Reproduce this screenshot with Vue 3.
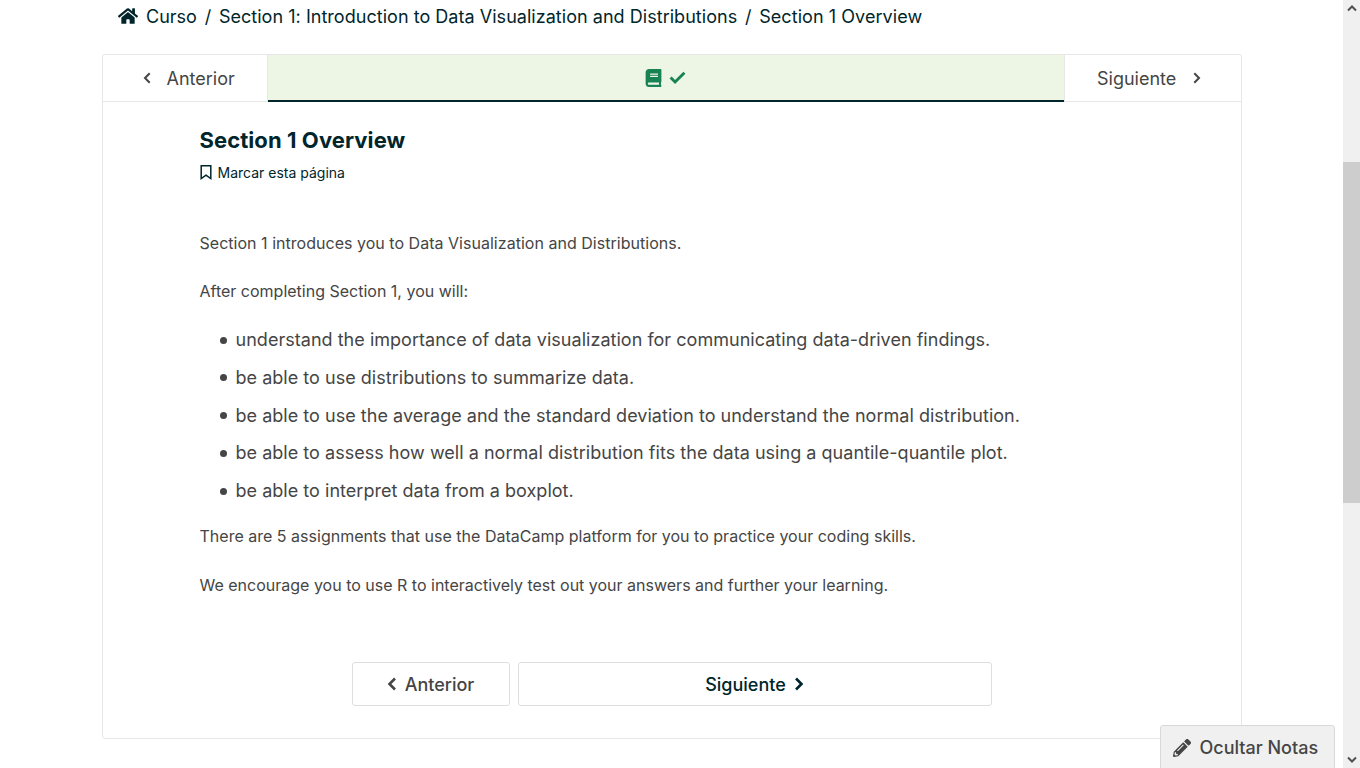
<script setup>
const goals = [
  'understand the importance of data visualization for communicating data-driven findings.',
  'be able to use distributions to summarize data.',
  'be able to use the average and the standard deviation to understand the normal distribution.',
  'be able to assess how well a normal distribution fits the data using a quantile-quantile plot.',
  'be able to interpret data from a boxplot.',
]
</script>

<template>
  <div class="window">
    <div class="page">
      <nav class="breadcrumb">
        <svg class="home" viewBox="0 0 576 512"><path d="M280.4 148.3L96 300.1V464a16 16 0 0 0 16 16l112-.3a16 16 0 0 0 16-16V368a16 16 0 0 1 16-16h64a16 16 0 0 1 16 16v95.600a16 16 0 0 0 16 16.100L464 480a16 16 0 0 0 16-16V300L295.700 148.300a12.200 12.200 0 0 0-15.300 0zM571.600 251.500L488 182.600V44a12 12 0 0 0-12-12h-56a12 12 0 0 0-12 12v72.600L318.500 43a48 48 0 0 0-61 0L4.300 251.500a12 12 0 0 0-1.600 16.900l25.500 31a12 12 0 0 0 16.900 1.600l235.200-193.700a12.200 12.200 0 0 1 15.300 0L530.900 301a12 12 0 0 0 16.900-1.600l25.500-31a12 12 0 0 0-1.700-16.900z" /></svg>
        <span>Curso</span><span class="sep">/</span>
        <span class="section">Section 1: Introduction to Data Visualization and Distributions</span><span class="sep">/</span>
        <span class="current">Section 1 Overview</span>
      </nav>

      <main class="card">
        <div class="sequence">
          <button class="step prev">
            <svg class="chev" viewBox="0 0 8 12"><path d="M6.700 1.300 2 6l4.700 4.700" /></svg>
            <span>Anterior</span>
          </button>
          <div class="tab">
            <svg class="book" viewBox="0 0 448 512"><path d="M448 360V24c0-13.300-10.700-24-24-24H96C43 0 0 43 0 96v320c0 53 43 96 96 96h328c13.300 0 24-10.700 24-24v-16c0-7.500-3.500-14.300-8.900-18.700-4.200-15.400-4.200-59.300 0-74.700 5.400-4.300 8.900-11.100 8.900-18.600zM128 134c0-3.300 2.700-6 6-6h212c3.300 0 6 2.700 6 6v20c0 3.300-2.700 6-6 6H134c-3.300 0-6-2.700-6-6v-20zm0 64c0-3.300 2.700-6 6-6h212c3.300 0 6 2.700 6 6v20c0 3.300-2.700 6-6 6H134c-3.300 0-6-2.700-6-6v-20zm253.400 250H96c-17.700 0-32-14.300-32-32 0-17.600 14.400-32 32-32h285.400c-1.900 17.100-1.900 46.900 0 64z" /></svg>
            <svg class="check" viewBox="0 0 16 12"><path d="M1.500 6 5.700 10.200 14.500 1.500" /></svg>
          </div>
          <button class="step next">
            <span>Siguiente</span>
            <svg class="chev" viewBox="0 0 8 12"><path d="M1.300 1.300 6 6l-4.700 4.700" /></svg>
          </button>
        </div>

        <article class="content">
          <h1>Section 1 Overview</h1>
          <div class="bookmark">
            <svg viewBox="0 0 12 15"><path d="M1.200.8h9.600v12.700L6 10.200l-4.800 3.300z" /></svg>
            <span>Marcar esta página</span>
          </div>
          <p class="intro">Section 1 introduces you to Data Visualization and Distributions.</p>
          <p class="lead">After completing Section 1, you will:</p>
          <ul>
            <li v-for="goal in goals" :key="goal"><span>{{ goal }}</span></li>
          </ul>
          <p class="platform">There are 5 assignments that use the DataCamp platform for you to practice your coding skills.</p>
          <p class="practice">We encourage you to use R to interactively test out your answers and further your learning.</p>
        </article>

        <div class="pager">
          <button class="page-prev">
            <svg class="arrow" viewBox="0 0 10 14"><path d="M8 1.500 2.500 7 8 12.500" /></svg>
            <span>Anterior</span>
          </button>
          <button class="page-next">
            <span>Siguiente</span>
            <svg class="arrow" viewBox="0 0 10 14"><path d="M2 1.500 7.500 7 2 12.500" /></svg>
          </button>
        </div>
      </main>
    </div>

    <button class="notes">
      <svg viewBox="0 0 512 512"><path d="M497.900 142.100l-46.100 46.100c-4.700 4.700-12.300 4.700-17 0l-111-111c-4.700-4.700-4.700-12.300 0-17l46.100-46.100c18.700-18.700 49.100-18.700 67.900 0l60.100 60.100c18.800 18.700 18.800 49.100 0 67.900zM284.200 99.800L21.600 362.400.4 483.900c-2.900 16.400 11.400 30.600 27.800 27.800l121.500-21.300 262.600-262.600c4.700-4.700 4.700-12.300 0-17l-111-111c-4.800-4.700-12.400-4.700-17.100 0zM124.100 339.900c-5.500-5.500-5.500-14.300 0-19.800l154-154c5.500-5.500 14.300-5.500 19.800 0s5.500 14.300 0 19.800l-154 154c-5.500 5.500-14.300 5.500-19.800 0zM88 424h48v36.300l-64.500 11.300-31.100-31.100L51.700 376H88v48z" /></svg>
      <span>Ocultar Notas</span>
    </button>

    <div class="scrollbar">
      <svg viewBox="0 0 10 7"><path d="M1 5.500 5 1.500l4 4" /></svg>
      <div class="track"><div class="thumb"></div></div>
      <svg viewBox="0 0 10 7"><path d="M1 1.500l4 4 4-4" /></svg>
    </div>
  </div>
</template>

<style>
body { margin: 0; overflow: hidden; background: #fff; }
</style>

<style scoped>
* { box-sizing: border-box; }
svg { display: block; flex: none; fill: currentColor; }
button { margin: 0; padding: 0; background: #fff; font: inherit; color: inherit; border: 0; display: flex; align-items: center; }
.window { position: relative; display: flex; width: 1360px; height: 768px; overflow: hidden; font-family: Inter, "Liberation Sans", sans-serif; font-size: 18px; color: #454545; }
.page { flex: 1; padding: 0 101px 0 102px; }
.breadcrumb { display: flex; align-items: center; height: 32px; padding-left: 16px; color: #00262b; white-space: nowrap; }
.home { width: 20px; height: 18px; margin-right: 8px; }
.sep { width: 22px; text-align: center; }
.section { letter-spacing: 0.035px; }
.current { letter-spacing: 0.060px; }
.card { width: 1140px; height: 685px; margin-top: 22px; border: 1px solid #e7e7e7; border-radius: 3px; }
.sequence { display: flex; height: 47px; }
.step { height: 47px; border-bottom: 1px solid #e7e7e7; }
.prev { width: 165px; padding-left: 40px; gap: 15.500px; border-right: 1px solid #e7e7e7; border-radius: 3px 0 0 0; }
.next { width: 177px; padding-left: 32px; gap: 17px; border-left: 1px solid #e7e7e7; border-radius: 0 3px 0 0; }
.chev { width: 8px; height: 12px; fill: none; stroke: currentColor; stroke-width: 2; }
.tab { flex: 1; display: flex; align-items: center; justify-content: center; gap: 7px; padding-right: 1px; background: #edf6e5; border-bottom: 2px solid #00262b; color: #178253; }
.book { width: 17px; height: 18px; }
.check { width: 17px; height: 13px; fill: none; stroke: currentColor; stroke-width: 2.700; }
.content { padding: 22px 97px 0 96.500px; }
h1 { margin: 0; font-size: 22px; line-height: 32px; font-weight: 700; letter-spacing: 0.080px; color: #00262b; }
.bookmark { display: flex; align-items: center; gap: 6px; height: 24px; margin-top: 4px; font-size: 14px; color: #00262b; }
.bookmark svg { width: 12px; height: 15px; fill: none; stroke: currentColor; stroke-width: 1.500; }
p { margin: 0; font-size: 16px; line-height: 24px; white-space: nowrap; }
.intro { margin-top: 47px; letter-spacing: 0.025px; }
.lead { margin-top: 24px; }
ul { list-style: none; margin: 17.800px 0 0; padding: 0 0 0 20px; }
li { display: flex; align-items: center; height: 37.750px; gap: 9px; white-space: nowrap; letter-spacing: 0.028px; }
li::before { content: ""; width: 7px; height: 7px; margin-top: 1px; border-radius: 50%; background: currentColor; }
.platform { margin-top: 14.200px; letter-spacing: 0.010px; }
.practice { margin-top: 25px; }
.pager { display: flex; gap: 8px; width: 640px; margin: 65px 0 0 249px; font-weight: 500; }
.pager button { height: 44px; padding: 2px 1px 0 0; justify-content: center; gap: 8px; border: 1px solid #dedede; border-radius: 3px; }
.pager .arrow { margin-top: -2px; }
.page-prev { width: 158px; }
.page-next { width: 474px; color: #00262b; }
.arrow { width: 10px; height: 14px; fill: none; stroke: currentColor; stroke-width: 2.600; }
.notes { position: absolute; left: 1160px; top: 725px; width: 175px; height: 45px; padding-left: 12px; gap: 8.500px; background: #f0f0f0; border: 1px solid #d8d8d8; border-radius: 3px 3px 0 0; font-weight: 500; white-space: nowrap; }
.notes svg { width: 18px; height: 18px; }
.scrollbar { width: 17px; display: flex; flex-direction: column; align-items: center; padding: 5px 0; background: #f0f0f0; }
.scrollbar svg { width: 10px; height: 7px; fill: none; stroke: #505050; stroke-width: 2; }
.track { flex: 1; width: 17px; padding-top: 150px; }
.thumb { height: 341px; background: #cdcdcd; }
</style>
